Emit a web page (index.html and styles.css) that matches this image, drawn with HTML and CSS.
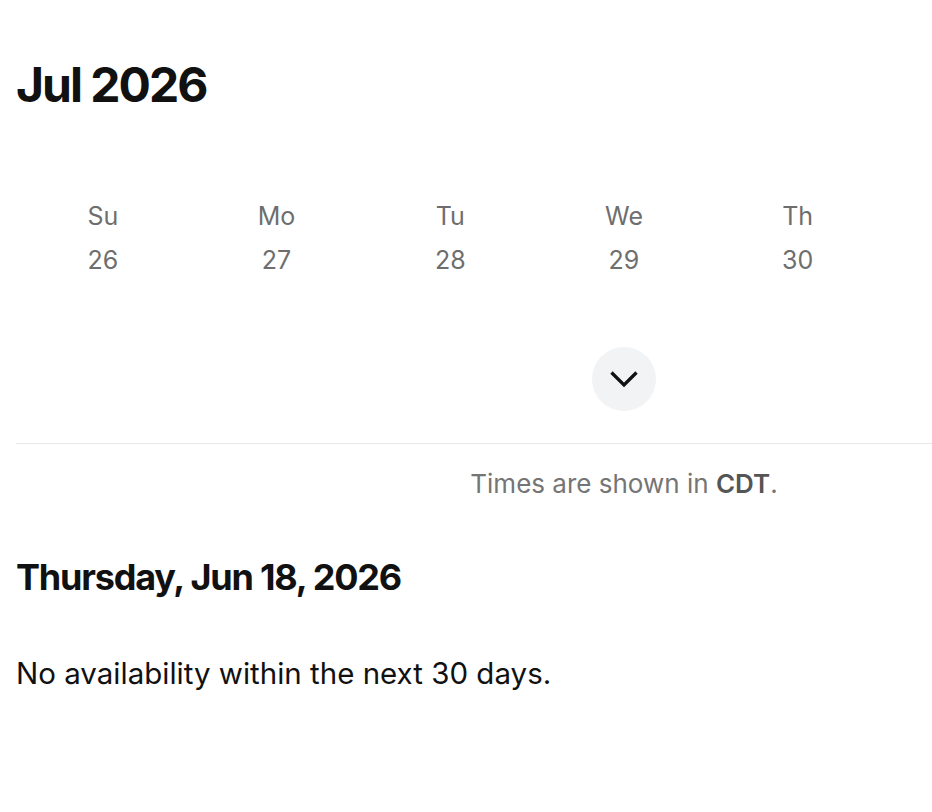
FILE: index.html
```html
<!DOCTYPE html>
<html lang="en">

<head>
    <meta charset="UTF-8">
    <meta name="viewport" content="width=device-width, initial-scale=1.0">
    <title>Pick a time</title>
    <link rel="stylesheet" href="styles.css">
</head>

<body>
    <div class="scheduler">
        <h1 class="month">Jul 2026</h1>

        <div class="week">
            <div class="day"><span class="day-name">Su</span><span class="day-num">26</span></div>
            <div class="day"><span class="day-name">Mo</span><span class="day-num">27</span></div>
            <div class="day"><span class="day-name">Tu</span><span class="day-num">28</span></div>
            <div class="day"><span class="day-name">We</span><span class="day-num">29</span></div>
            <div class="day"><span class="day-name">Th</span><span class="day-num">30</span></div>
        </div>

        <div class="expand-row">
            <button class="expand" aria-label="Show more">
                <svg width="32" height="32" viewBox="0 0 24 24" fill="none" stroke="#111" stroke-width="2.5"
                    stroke-linecap="square" stroke-linejoin="miter">
                    <path d="M3.5 8l8.5 8.5 8.5-8.5" />
                </svg>
            </button>
        </div>

        <p class="tz">Times are shown in <strong>CDT</strong>.</p>

        <h2 class="date">Thursday, Jun 18, 2026</h2>

        <p class="empty">No availability within the next 30 days.</p>
    </div>
</body>

</html>
```

FILE: styles.css
```css
body {
    margin: 0;
    background: #fff;
    color: #111;
    font-family: Inter, "Noto Sans", sans-serif;
    overflow-x: hidden;
}

/* the widget is wider than the window, the right part is cut off */
.scheduler {
    width: 1216px;
    padding: 0 16px;
}

.month {
    margin: 0;
    padding-top: 57px;
    font-size: 48px;
    font-weight: 700;
    letter-spacing: -2px;
    line-height: 56px;
}

.week {
    display: grid;
    grid-template-columns: repeat(7, 1fr);
    margin-top: 81px;
}

.day {
    display: flex;
    flex-direction: column;
    align-items: center;
    color: #6e6e6e;
    font-size: 25px;
    line-height: 44px;
}

.expand-row {
    display: flex;
    justify-content: center;
    margin-top: 65px;
    padding-bottom: 32px;
    border-bottom: 1px solid #e8e8e8;
}

.expand {
    width: 64px;
    height: 64px;
    border: none;
    border-radius: 50%;
    background: #f2f3f5;
    display: flex;
    align-items: center;
    justify-content: center;
    padding: 0;
}

.tz {
    margin: 22px 0 0;
    text-align: center;
    color: #757575;
    font-size: 26px;
    line-height: 36px;
}

.tz strong {
    color: #555;
    font-weight: 600;
}

.date {
    margin: 53px 0 0;
    font-size: 36px;
    font-weight: 700;
    letter-spacing: -1.2px;
    line-height: 44px;
}

.empty {
    margin: 54px 0 0;
    font-size: 29.5px;
    line-height: 40px;
}
```
